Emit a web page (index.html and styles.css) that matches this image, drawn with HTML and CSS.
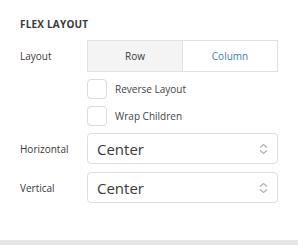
FILE: index.html
```html
<!DOCTYPE html>
<html lang="en">
<head>
  <meta charset="UTF-8" />
  <title>Flex Layout</title>
  <link rel="stylesheet" href="styles.css">
</head>
<body>

  <section class="panel">
    <h3 class="panel-title">FLEX LAYOUT</h3>

    <div class="field">
      <label>Layout</label>
      <div class="segmented">
        <span class="seg">Row</span>
        <span class="seg active">Column</span>
      </div>
    </div>

    <div class="field field-check">
      <span></span>
      <div class="check"><span class="box"></span>Reverse Layout</div>
    </div>
    <div class="field field-check">
      <span></span>
      <div class="check"><span class="box"></span>Wrap Children</div>
    </div>

    <div class="field field-select">
      <label>Horizontal</label>
      <div class="select">
        <span>Center</span>
        <svg width="9" height="12" viewBox="0 0 9 12"><path d="M1 4.5 L4.5 1.5 L8 4.5 M1 7.5 L4.5 10.5 L8 7.5" fill="none" stroke="#b3b3b3" stroke-width="1.3"/></svg>
      </div>
    </div>
    <div class="field field-select">
      <label>Vertical</label>
      <div class="select">
        <span>Center</span>
        <svg width="9" height="12" viewBox="0 0 9 12"><path d="M1 4.5 L4.5 1.5 L8 4.5 M1 7.5 L4.5 10.5 L8 7.5" fill="none" stroke="#b3b3b3" stroke-width="1.3"/></svg>
      </div>
    </div>
  </section>

  <div class="footer-bar"></div>

</body>
</html>
```

FILE: styles.css
```css
body {
  margin: 0;
  font-family: 'Open Sans', sans-serif;
  background-color: #fff;
  color: #444;
  width: 298px;
  height: 245px;
  overflow: hidden;
}
.panel {
  padding: 17px 20px 0 20px;
}
.panel-title {
  margin: 0 0 9px 0;
  font-size: 10px;
  line-height: 14px;
  font-weight: bold;
  letter-spacing: 0.2px;
  color: #3a3a3a;
}
.field {
  display: grid;
  grid-template-columns: 67px 1fr;
  align-items: center;
}
.field label {
  font-size: 10px;
  color: #3a3a3a;
}
.segmented {
  display: flex;
  height: 32px;
  border: 1px solid #e1e1e1;
  box-sizing: border-box;
}
.seg {
  flex: 1;
  display: flex;
  align-items: center;
  justify-content: center;
  font-size: 10px;
  color: #3a3a3a;
  background: #f4f4f4;
}
.seg.active {
  background: #fff;
  color: #3a7fb8;
  border-left: 1px solid #e1e1e1;
}
.field-check {
  margin-top: 7px;
}
.check {
  display: flex;
  align-items: center;
  font-size: 10px;
  color: #444;
}
.box {
  width: 20px;
  height: 20px;
  box-sizing: border-box;
  border: 1px solid #dcdcdc;
  border-radius: 4px;
  margin-right: 8px;
}
.field-select {
  margin-top: 7px;
}
.field-select + .field-select {
  margin-top: 8px;
}
.select {
  height: 31px;
  box-sizing: border-box;
  border: 1px solid #dedede;
  border-radius: 4px;
  display: flex;
  align-items: center;
  justify-content: space-between;
  padding: 0 9px 0 9px;
  font-size: 15px;
  color: #3a3a3a;
}
.footer-bar {
  height: 5px;
  margin-top: 37px;
  background: #e6e6e6;
}
```
